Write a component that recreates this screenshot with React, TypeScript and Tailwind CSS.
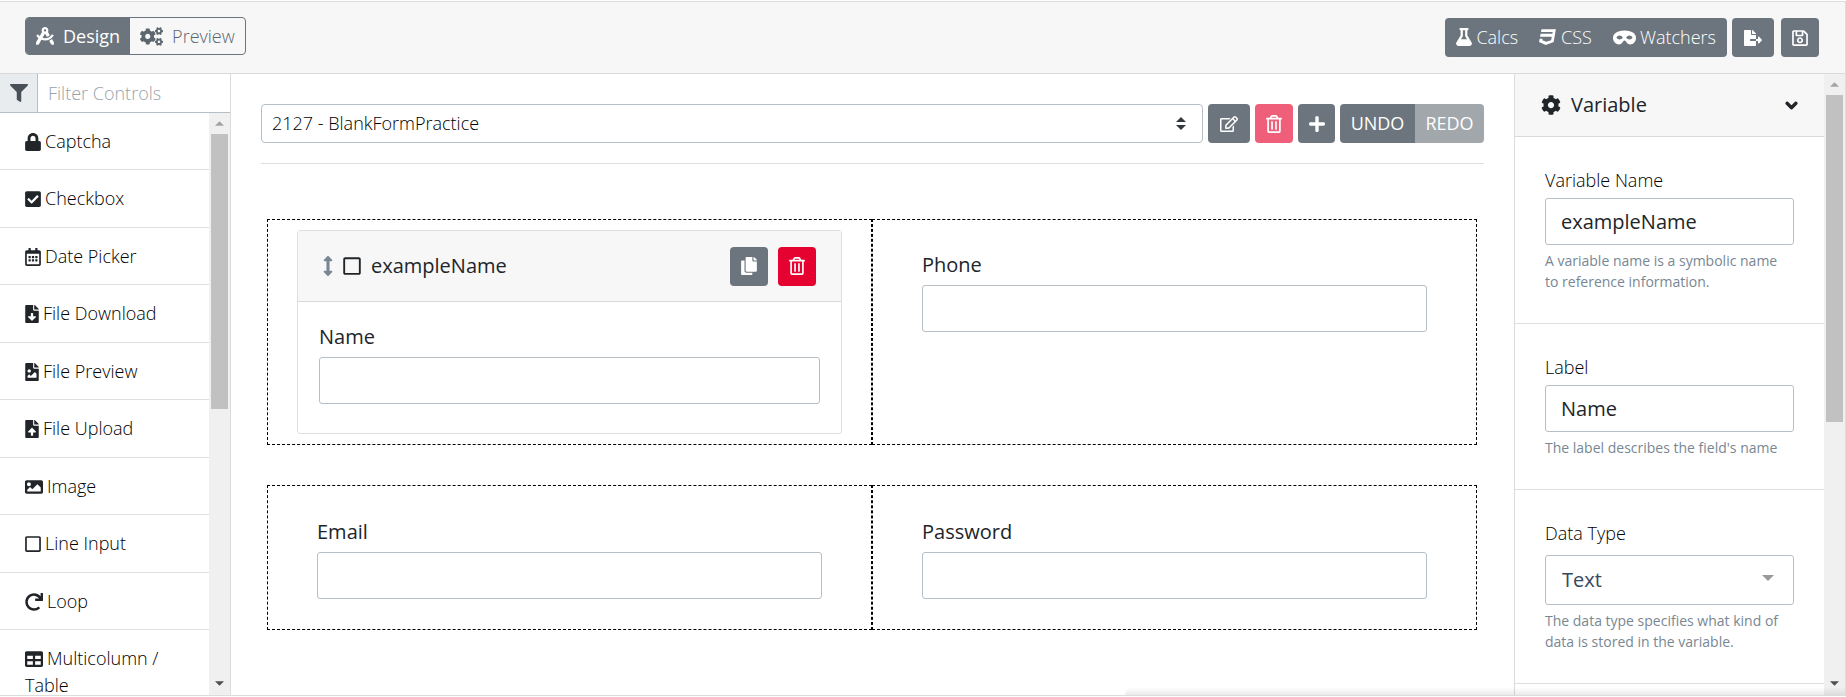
import React, { useState } from "react";
import {
  FaDraftingCompass, FaCogs, FaFlask, FaCss3, FaMask, FaFileExport, FaRegSave, FaFilter, FaLock,
  FaCheckSquare, FaRegCalendarAlt, FaFileDownload, FaFileImage, FaFileUpload, FaImage, FaRegSquare,
  FaRedo, FaTable, FaCog, FaChevronDown, FaRegEdit, FaRegTrashAlt, FaPlus, FaArrowsAltV, FaCopy,
} from "react-icons/fa";
import type { IconType } from "react-icons";

const controls: { label: string; icon: IconType; width: string }[] = [
  { label: "Captcha", icon: FaLock, width: "w-4" },
  { label: "Checkbox", icon: FaCheckSquare, width: "w-4" },
  { label: "Date Picker", icon: FaRegCalendarAlt, width: "w-4" },
  { label: "File Download", icon: FaFileDownload, width: "w-[14px]" },
  { label: "File Preview", icon: FaFileImage, width: "w-[14px]" },
  { label: "File Upload", icon: FaFileUpload, width: "w-[14px]" },
  { label: "Image", icon: FaImage, width: "w-[18px]" },
  { label: "Line Input", icon: FaRegSquare, width: "w-4" },
  { label: "Loop", icon: FaRedo, width: "w-[18px]" },
  { label: "Multicolumn / Table", icon: FaTable, width: "w-[18px]" },
];

function Triangle({ up = false, className }: { up?: boolean; className: string }) {
  return (
    <svg viewBox="0 0 10 5" className={className} fill="currentColor" aria-hidden="true">
      <path d={up ? "M0 5L5 0L10 5Z" : "M0 0H10L5 5Z"} />
    </svg>
  );
}

function ScrollTrack({ thumb }: { thumb: string }) {
  return (
    <div aria-hidden="true" className="flex w-[21px] shrink-0 flex-col items-center bg-[#f0f0f0]">
      <div className="flex h-[21px] shrink-0 items-center text-[#a3a3a3]">
        <Triangle up className="h-[5px] w-[9px]" />
      </div>
      <div className={"w-[17px] bg-[#c1c1c1] " + thumb} />
      <div className="mt-auto flex h-6 shrink-0 items-center text-[#505050]">
        <Triangle className="h-[5px] w-[9px]" />
      </div>
    </div>
  );
}

function ToolButton({ label, icon: Icon, tone }: { label: string; icon: IconType; tone: string }) {
  return (
    <button type="button" aria-label={label} className={"flex h-[39px] shrink-0 items-center justify-center rounded text-white " + tone}>
      <Icon className="size-[18px]" />
    </button>
  );
}

function Field({ id, label }: { id: string; label: string }) {
  return (
    <div className="flex flex-col">
      <label htmlFor={id} className="mb-[5px] text-xl leading-[30px]">{label}</label>
      <input id={id} className="h-[47px] w-full rounded-[3px] border border-[#b6bfc6] bg-white px-4 text-xl outline-none" />
    </div>
  );
}

function Setting({ id, label, help, children }: { id: string; label: string; help: string; children: React.ReactNode }) {
  return (
    <div className="border-b border-[#dfdfdf] px-[30px] pt-[30px] pb-[31px]">
      <label htmlFor={id} className="mb-1 block text-lg leading-[27px] font-light text-black">{label}</label>
      {children}
      <p className="mt-[5px] text-sm leading-[21px] text-[#788793]">{help}</p>
    </div>
  );
}

export default function App() {
  const [variableName, setVariableName] = useState("exampleName");
  const [label, setLabel] = useState("Name");
  return (
    <div className="flex h-screen flex-col bg-white pt-px pb-px font-['Open_Sans',sans-serif] text-lg text-[#212529]">
      <div className="relative flex min-h-0 flex-1 flex-col border-t border-r border-b border-[#dcdcdc]">
        <header className="flex h-[72px] shrink-0 items-center justify-between border-b border-[#d9d9d9] bg-[#f7f7f7] pr-[26px] pl-[25px]">
          <div className="mb-[3px] flex h-[38px] overflow-hidden rounded border border-[#6c757d]">
            <button type="button" className="flex items-center gap-[9px] bg-[#6c757d] px-[10px] text-white">
              <FaDraftingCompass className="size-[18px]" />Design
            </button>
            <button type="button" className="flex items-center gap-[9px] px-[10px] font-light text-[#5c666f]">
              <FaCogs className="size-[23px]" />Preview
            </button>
          </div>
          <div className="flex items-center">
            <div className="flex h-[39px] rounded bg-[#6c757d] font-light text-white">
              <button type="button" className="flex items-center gap-1 px-[11px] pb-px"><FaFlask className="h-[18px] w-4" />Calcs</button>
              <button type="button" className="flex items-center gap-1 px-[10px] pb-px"><FaCss3 className="size-[18px]" />CSS</button>
              <button type="button" className="flex items-center gap-1 px-[11px] pb-px"><FaMask className="size-[23px]" />Watchers</button>
            </div>
            <div className="ml-[5px] flex gap-[7px]">
              <ToolButton label="Export" icon={FaFileExport} tone="w-[42px] bg-[#6c757d]" />
              <ToolButton label="Save" icon={FaRegSave} tone="w-[38px] bg-[#6c757d]" />
            </div>
          </div>
        </header>

        <div className="flex min-h-0 flex-1">
          <aside className="flex w-[231px] shrink-0 flex-col border-r border-[#dcdcdc]">
            <div className="flex h-[39px] shrink-0 border-b border-[#b6bfc6]">
              <label htmlFor="filter" aria-label="Filter Controls" className="flex w-[38px] shrink-0 items-center justify-center border-r border-[#b6bfc6] bg-[#e9ecef] text-[#495057]">
                <FaFilter className="size-[18px]" />
              </label>
              <input id="filter" placeholder="Filter Controls" className="min-w-0 flex-1 px-[10px] text-lg font-light outline-none placeholder:text-[#98a3aa]" />
            </div>
            <div className="flex min-h-0 flex-1">
              <ul className="min-w-0 flex-1 overflow-hidden font-light">
                {controls.map(({ label, icon: Icon, width }) => (
                  <li key={label} className="min-h-[57px] border-b border-[#dfdfdf] px-[25px] pt-[15px] pb-[14px] leading-[27px] text-black even:min-h-[58px]">
                    <Icon className={"-mt-[3px] mr-1 inline h-[18px] text-[#212529] " + width} />{label}
                  </li>
                ))}
              </ul>
              <ScrollTrack thumb="h-[275px]" />
            </div>
          </aside>

          <main className="min-w-0 flex-1 overflow-hidden px-[30px] pt-[30px]">
            <div className="flex gap-[5px] border-b border-[#dfdfdf] pb-5">
              <div className="relative min-w-0 flex-1">
                <select aria-label="Screen" className="h-[39px] w-full appearance-none rounded border border-[#b6bfc6] bg-white px-[10px] pb-0.5 text-lg font-light text-black outline-none">
                  <option>2127 - BlankFormPractice</option>
                </select>
                <span className="pointer-events-none absolute inset-y-0 right-[17px] flex flex-col items-center justify-center gap-[3px] text-[#343a40]">
                  <Triangle up className="h-[5px] w-[10px]" />
                  <Triangle className="h-[5px] w-[10px]" />
                </span>
              </div>
              <ToolButton label="Edit" icon={FaRegEdit} tone="w-[42px] bg-[#6c757d]" />
              <ToolButton label="Delete" icon={FaRegTrashAlt} tone="w-[38px] bg-[#f05f7a]" />
              <ToolButton label="Add" icon={FaPlus} tone="w-[37px] bg-[#6c757d]" />
              <div className="flex h-[39px] shrink-0 overflow-hidden rounded text-white">
                <button type="button" className="w-[75px] bg-[#6c757d] pb-px">UNDO</button>
                <button type="button" disabled className="w-[69px] bg-[#a1a7ab] pb-px">REDO</button>
              </div>
            </div>

            <div className="mt-[55px] mr-[7px] ml-[6px] grid grid-cols-2">
              <section className="border border-dashed border-black px-[29px] py-[10px]">
                <div className="rounded-[3px] border border-[#dfdfdf]">
                  <div className="flex h-[71px] items-center border-b border-[#d9d9d9] bg-[#f7f7f7] px-[25px]">
                    <FaArrowsAltV className="h-5 w-[10px] text-[#788793]" />
                    <FaRegSquare className="ml-[10px] h-5 w-[18px]" />
                    <span className="ml-[10px] flex-1 text-xl">exampleName</span>
                    <div className="flex gap-[10px]">
                      <ToolButton label="Copy control" icon={FaCopy} tone="w-[38px] bg-[#6c757d]" />
                      <ToolButton label="Delete control" icon={FaRegTrashAlt} tone="w-[38px] bg-[#e50130]" />
                    </div>
                  </div>
                  <div className="px-[21px] pt-5 pb-[29px]">
                    <Field id="name" label="Name" />
                  </div>
                </div>
              </section>
              <section className="border border-dashed border-black px-[49px] pt-[30px]">
                <Field id="phone" label="Phone" />
              </section>
            </div>

            <div className="mt-10 mr-[7px] ml-[6px] grid grid-cols-2">
              <section className="border border-dashed border-black px-[49px] pt-[31px] pb-[30px]">
                <Field id="email" label="Email" />
              </section>
              <section className="border border-dashed border-black px-[49px] pt-[31px] pb-[30px]">
                <Field id="password" label="Password" />
              </section>
            </div>
          </main>

          <aside className="flex w-[331px] shrink-0 border-l border-[#dcdcdc]">
            <div className="min-w-0 flex-1 overflow-hidden">
              <button type="button" className="flex h-[63px] w-full items-center border-b border-[#d9d9d9] bg-[#f7f7f7] pr-[26px] pl-[26px] text-xl">
                <FaCog className="mr-[10px] size-5" />
                <span className="flex-1 text-left">Variable</span>
                <FaChevronDown className="size-[13px]" stroke="currentColor" strokeWidth={50} />
              </button>
              <Setting id="variable-name" label="Variable Name" help="A variable name is a symbolic name to reference information.">
                <input id="variable-name" value={variableName} onChange={(e) => setVariableName(e.target.value)} className="block h-[47px] w-full rounded-[3px] border border-[#b6bfc6] px-[15px] text-xl outline-none" />
              </Setting>
              <Setting id="label" label="Label" help="The label describes the field's name">
                <input id="label" value={label} onChange={(e) => setLabel(e.target.value)} className="block h-[47px] w-full rounded-[3px] border border-[#b6bfc6] px-[15px] text-xl outline-none" />
              </Setting>
              <Setting id="data-type" label="Data Type" help="The data type specifies what kind of data is stored in the variable.">
                <div className="relative">
                  <select id="data-type" className="mt-2 block h-[50px] w-full appearance-none rounded-[3px] border border-[#b6bfc6] bg-white px-4 text-xl text-[#35495e] outline-none">
                    <option>Text</option>
                  </select>
                  <Triangle className="pointer-events-none absolute top-5 right-5 h-[6px] w-3 text-[#999]" />
                </div>
              </Setting>
            </div>
            <ScrollTrack thumb="h-[327px]" />
          </aside>
        </div>
        <div className="pointer-events-none absolute right-0 bottom-0 h-2 w-[39%] rounded-tl-full bg-linear-to-b from-transparent to-black/8" />
      </div>
    </div>
  );
}
